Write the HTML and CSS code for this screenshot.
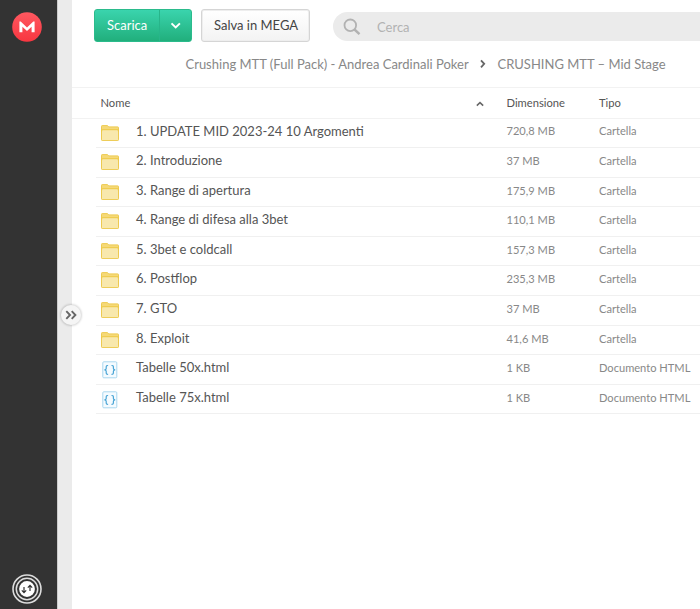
FILE: index.html
```
<!DOCTYPE html>
<html lang="it">
<head>
<meta charset="utf-8">
<title>MEGA</title>
<link rel="stylesheet" href="styles.css">
</head>
<body>
<svg class="defs" aria-hidden="true">
  <symbol id="folder" viewBox="0 0 18 16">
    <path d="M.5 14.8V1.3Q.5.6 1.2.6h4.9q.7 0 1.1.6l.6.7h9q.7 0 .7.7v12.2q0 .7-.7.7H1.2q-.7 0-.7-.7z" fill="#f5d978" stroke="#edca50"/>
    <path d="M1 4.7h16v10.4H1z" fill="#f8e8ad"/>
    <path d="M.8 6.2V5.1q0-.4.4-.4h15.6q.4 0 .4.4v1.1" fill="none" stroke="#edc843"/>
  </symbol>
  <symbol id="code" viewBox="0 0 16 18">
    <rect x=".8" y=".8" width="14" height="16" rx="1" fill="#f5fbff" stroke="#a9d7ef"/>
    <path d="M6.1 4.5Q4.2 4.4 4.2 6v1.5q0 1.3-1.8 1.4 1.8.1 1.8 1.4v1.5q0 1.6 1.9 1.5M9.5 4.5q1.9-.1 1.9 1.5v1.5q0 1.3 1.8 1.4-1.8.1-1.8 1.4v1.5q0 1.6-1.9 1.5" fill="none" stroke="#4aa5d5" stroke-width="1.2"/>
  </symbol>
</svg>
<div class="app">
  <aside class="rail">
    <svg class="logo" viewBox="0 0 30 30"><defs><linearGradient id="red" x1="0" y1="0" x2="0" y2="1"><stop stop-color="#ff5860"/><stop offset="1" stop-color="#f83640"/></linearGradient></defs><circle cx="15" cy="15" r="14.8" fill="url(#red)"/><path d="M7.4 20.2V9.5h1.3l6.3 6.1 6.3-6.1h1.3v10.7h-3v-5.5L15 19.1l-4.6-4.4v5.5z" fill="#fff"/></svg>
    <svg class="transfers" viewBox="0 0 30 30"><circle cx="15" cy="15" r="14" fill="none" stroke="#ddd" stroke-width="1.6"/><circle cx="15" cy="15" r="10.7" fill="none" stroke="#ddd" stroke-width="1.5"/><circle cx="15" cy="15" r="7.9" fill="#fff"/><path d="M12 13v5.5m-2.2-2.1 2.2 2.2 2.2-2.2M18 17v-5.5m-2.2 2.1 2.2-2.2 2.2 2.2" fill="none" stroke="#333" stroke-width="1.2"/></svg>
  </aside>
  <div class="gutter"><div class="expand"><svg viewBox="0 0 12 10"><path d="M1.3 1.2 5 5 1.3 8.8M6.7 1.2 10.4 5 6.7 8.8" fill="none" stroke="#666" stroke-width="1.9"/></svg></div></div>
  <main class="main">
    <header class="toolbar">
      <div class="download"><span class="download-label">Scarica</span><span class="download-more"><svg viewBox="0 0 12 8"><path d="m1.5 1.4 4.2 4 4.2-4" fill="none" stroke="#fff" stroke-width="2"/></svg></span></div>
      <div class="save">Salva in MEGA</div>
      <div class="search"><svg viewBox="0 0 18 18"><circle cx="7.3" cy="7.3" r="5.8" fill="none" stroke="#b2b2b2" stroke-width="1.8"/><path d="m11.5 11.5 5 4.6" stroke="#b2b2b2" stroke-width="2.4"/></svg><span>Cerca</span></div>
    </header>
    <nav class="crumbs"><span class="crumb-parent">Crushing MTT (Full Pack) - Andrea Cardinali Poker</span><svg viewBox="0 0 6 10"><path d="m1 1.3 3.2 3.5L1 8.3" fill="none" stroke="#666" stroke-width="1.8"/></svg><span class="crumb-current">CRUSHING MTT – Mid Stage</span></nav>
    <div class="head"><span class="h-name">Nome</span><svg viewBox="0 0 8 6"><path d="m.8 4.6 3.2-3 3.2 3" fill="none" stroke="#666" stroke-width="1.5"/></svg><span class="h-size">Dimensione</span><span>Tipo</span></div>
    <div class="rows">
      <div class="row"><svg class="folder"><use href="#folder"/></svg><span class="name">1. UPDATE MID 2023-24 10 Argomenti</span><span class="size">720,8 MB</span><span class="type">Cartella</span></div>
      <div class="row"><svg class="folder"><use href="#folder"/></svg><span class="name">2. Introduzione</span><span class="size">37 MB</span><span class="type">Cartella</span></div>
      <div class="row"><svg class="folder"><use href="#folder"/></svg><span class="name">3. Range di apertura</span><span class="size">175,9 MB</span><span class="type">Cartella</span></div>
      <div class="row"><svg class="folder"><use href="#folder"/></svg><span class="name">4. Range di difesa alla 3bet</span><span class="size">110,1 MB</span><span class="type">Cartella</span></div>
      <div class="row"><svg class="folder"><use href="#folder"/></svg><span class="name">5. 3bet e coldcall</span><span class="size">157,3 MB</span><span class="type">Cartella</span></div>
      <div class="row"><svg class="folder"><use href="#folder"/></svg><span class="name">6. Postflop</span><span class="size">235,3 MB</span><span class="type">Cartella</span></div>
      <div class="row"><svg class="folder"><use href="#folder"/></svg><span class="name">7. GTO</span><span class="size">37 MB</span><span class="type">Cartella</span></div>
      <div class="row"><svg class="folder"><use href="#folder"/></svg><span class="name">8. Exploit</span><span class="size">41,6 MB</span><span class="type">Cartella</span></div>
      <div class="row"><svg class="code"><use href="#code"/></svg><span class="name">Tabelle 50x.html</span><span class="size">1 KB</span><span class="type">Documento HTML</span></div>
      <div class="row"><svg class="code"><use href="#code"/></svg><span class="name">Tabelle 75x.html</span><span class="size">1 KB</span><span class="type">Documento HTML</span></div>
    </div>
  </main>
</div>
</body>
</html>
```
FILE: styles.css
```
* { box-sizing: border-box; }
body { margin: 0; font-family: Lato, "Liberation Sans", sans-serif; color: #555; background: #fff; overflow: hidden; }
svg { display: block; flex: none; }
.defs { display: none; }
.app { display: flex; width: 700px; height: 609px; }
.rail { width: 57px; flex: none; background: #333; display: flex; flex-direction: column; justify-content: space-between; padding: 12.4px 0 5.2px 12.4px; }
.logo, .transfers { width: 30px; height: 30px; }
.gutter { width: 15px; flex: none; background: #ebebeb; border-left: 1px solid #ccc; position: relative; }
.expand { position: absolute; left: 2.5px; top: 304.5px; width: 20px; height: 20px; border-radius: 50%; background: #f5f5f5; box-shadow: 0 0 2px 1px rgba(0,0,0,.15); display: grid; place-items: center; }
.expand svg { width: 12px; height: 10px; }
.main { width: 628px; flex: none; overflow: hidden; white-space: nowrap; }
.toolbar { display: flex; height: 51px; padding: 9px 0 0 22px; }
.download { display: flex; width: 98px; height: 33px; border-radius: 3px; background: linear-gradient(#3ad4ad, #21af7c); border: 1px solid #2bbb8c; color: #fff; font-size: 13px; line-height: 31px; }
.download-label { width: 65px; padding-left: 12px; border-right: 1px solid #28b58a; }
.download-more { flex: 1; display: grid; place-items: center; }
.download-more svg { width: 12px; height: 8px; }
.save { width: 109px; height: 33px; margin-left: 9px; border: 1px solid #d5d5d5; border-radius: 3px; box-shadow: inset 0 0 0 1px #eee; background: linear-gradient(#fff, #f3f3f3); color: #444; font-size: 13px; line-height: 31px; padding-left: 12px; }
.search { flex: 1; height: 29px; margin: 3px 0 0 23px; border-radius: 15px 0 0 15px; background: #ebebeb; display: flex; align-items: center; padding-left: 9.5px; color: #b2b2b2; font-size: 13px; }
.search svg { width: 18px; height: 18px; margin-right: 16.5px; }
.crumbs { height: 37px; border-bottom: 1px solid #f2f2f2; display: flex; padding: 0 0 10px 113.5px; align-items: center; font-size: 13px; color: #888; }
.crumb-parent { width: 294.5px; }
.crumbs svg { width: 6px; height: 10px; margin-right: 11.5px; }
.head { height: 30px; display: flex; align-items: center; padding: 0 0 2px 28.5px; font-size: 11.2px; color: #555; }
.h-name { width: 375.5px; }
.head svg { width: 8px; height: 6px; margin-right: 22.5px; margin-top: 3px; }
.h-size { width: 92.5px; }
.rows { border-top: 1px solid #f2f2f2; }
.row { height: 29.6px; margin-left: 24px; border-bottom: 1px solid #f0f0f0; display: grid; grid-template-columns: 40px 370.5px 92.5px 1fr; line-height: 25px; font-size: 11.1px; color: #888; }
.row:first-child { height: 29px; line-height: 24px; }
.name { font-size: 13px; color: #555; }
.folder { width: 18px; height: 16px; margin: 6px 0 0 4.5px; }
.code { width: 16px; height: 18px; margin: 6px 0 0 5.7px; }
```
